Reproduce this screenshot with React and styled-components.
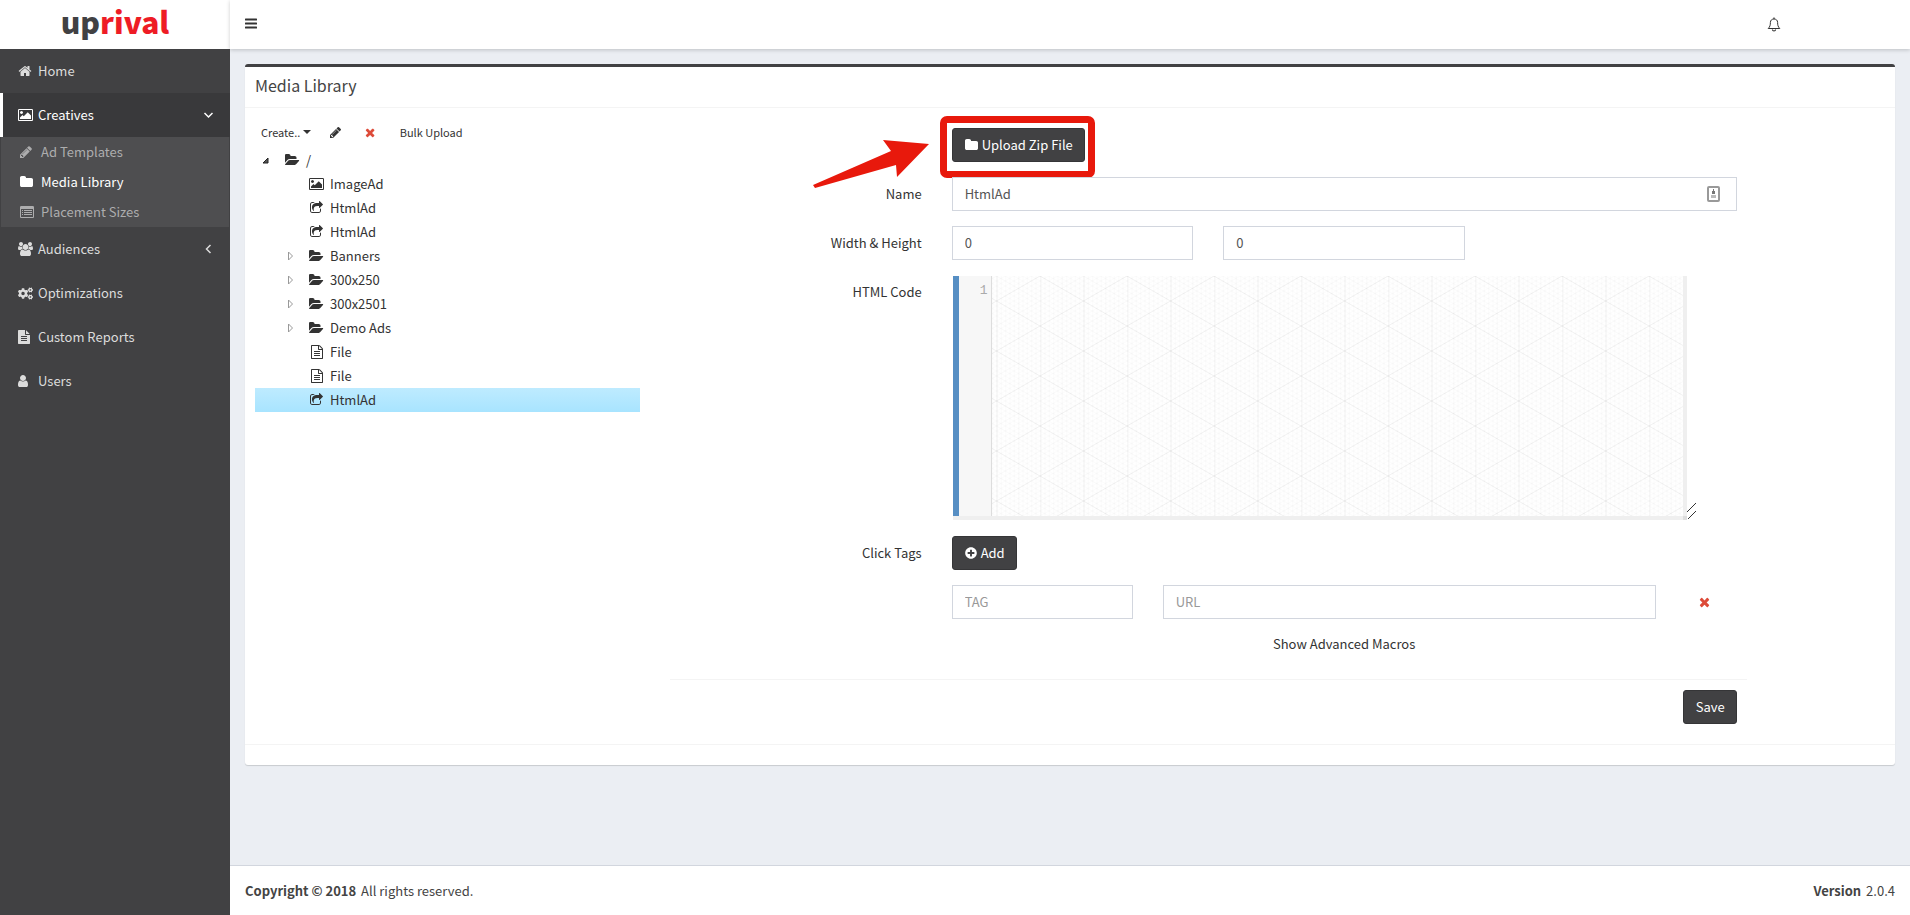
import styled, { createGlobalStyle } from 'styled-components';
import { FaCogs, FaPlusCircle } from 'react-icons/fa';

const GlobalStyle = createGlobalStyle`
  * {
    box-sizing: border-box;
  }

  body {
    margin: 0;
    background: #ebeef3;
    color: #333;
    font-family: "Noto Sans CJK SC", "Noto Sans", sans-serif;
    font-size: 13px;
    line-height: 20px;
  }

  button, input, textarea {
    font: inherit;
    color: inherit;
  }

  ul {
    list-style: none;
    margin: 0;
    padding: 0;
  }

  a {
    color: inherit;
    text-decoration: none;
  }
`;

const Page = styled.div`
  display: grid;
  grid-template-columns: 230px 1fr;
  grid-template-rows: 49px 1fr;
  min-height: 100vh;
`;

const LogoLink = styled.a`
  display: flex;
  justify-content: center;
  background: #fff;
  color: #414143;
  font-size: 30px;
  font-weight: 900;
  line-height: 43px;

  span {
    color: #ee1c25;
  }
`;

const TopBar = styled.header`
  display: flex;
  align-items: center;
  justify-content: space-between;
  padding: 0 122px 1px 8px;
  background: #fff;
  box-shadow: 0 1px 4px rgba(0, 0, 0, 0.2);
`;

const IconButton = styled.button`
  display: flex;
  padding: 7px;
  border: none;
  background: none;
  color: #333;
`;

const Sidebar = styled.nav`
  background: #414143;
  color: #dcdcdc;
`;

const MenuLink = styled.a`
  display: flex;
  align-items: center;
  gap: 5px;
  height: 44px;
  padding: 0 17px 0 15px;
  border-left: 3px solid ${(props) => (props.$active ? '#fff' : 'transparent')};
  background: ${(props) => (props.$active ? '#39393b' : 'none')};
  color: ${(props) => (props.$active ? '#fff' : 'inherit')};
`;

const MenuText = styled.span`
  flex: 1;
`;

const SubMenu = styled.ul`
  margin: 0 1px;
  background: #4e4e50;
`;

const SubLink = styled.a`
  display: flex;
  align-items: center;
  gap: 6px;
  height: 30px;
  padding-left: 19px;
  color: ${(props) => (props.$active ? '#fff' : '#adadae')};
`;

const IconSlot = styled.span`
  display: flex;
  width: 15px;
`;

const Main = styled.div`
  display: flex;
  flex-direction: column;
`;

const Content = styled.main`
  flex: 1;
  padding: 15px;
`;

const Box = styled.section`
  border-top: 3px solid #414143;
  border-radius: 3px;
  background: #fff;
  box-shadow: 0 1px 1px rgba(0, 0, 0, 0.15);
`;

const BoxTitle = styled.h3`
  margin: 0;
  padding: 8px 10px 12px;
  border-bottom: 1px solid #f4f4f4;
  color: #444;
  font-size: 16px;
  font-weight: 400;
  line-height: 20px;
`;

const BoxBody = styled.div`
  display: grid;
  grid-template-columns: repeat(12, 1fr);
  column-gap: 30px;
  padding: 10px 10px 20px;
`;

const BoxFooter = styled.div`
  height: 21px;
  border-top: 1px solid #f4f4f4;
`;

const TreePanel = styled.div`
  grid-column: span 3;
`;

const Toolbar = styled.div`
  display: flex;
  align-items: center;
  gap: 12px;
  height: 30px;
  padding-bottom: 2px;
`;

const ToolButton = styled.button`
  display: flex;
  align-items: center;
  gap: 3px;
  padding: 0 5px;
  border: 1px solid transparent;
  background: none;
  color: ${(props) => props.$color || '#333'};
  font-size: 11px;

  &:first-child {
    padding-right: 0;
  }
`;

const Caret = styled.span`
  border: 4px solid transparent;
  border-top-color: currentColor;
  border-bottom: none;
`;

const TreeRow = styled.li`
  display: flex;
  align-items: center;
  height: 24px;
  padding-left: ${(props) => 6 + props.$level * 24}px;
  background: ${(props) => (props.$selected ? 'linear-gradient(#beebff, #a8e4ff)' : 'none')};
`;

const Toggle = styled.span`
  display: flex;
  width: 24px;
`;

const TreeIcon = styled.span`
  display: flex;
  justify-content: center;
  width: 15px;
  margin-right: 6px;
`;

const Form = styled.form`
  grid-column: span 8;
`;

const Fields = styled.div`
  display: flex;
  flex-direction: column;
  gap: 15px;
  padding: 10px;
`;

const FieldRow = styled.div`
  display: grid;
  grid-template-columns: repeat(12, 1fr);
  column-gap: 30px;
`;

const Label = styled.label`
  grid-column: span 3;
  padding-top: 7px;
  text-align: right;
`;

const Control = styled.div`
  position: relative;
  grid-column: ${(props) => (props.$offset ? '4 / ' : '')} span ${(props) => props.$span || 9};
`;

const Input = styled.input`
  display: block;
  width: 100%;
  height: 34px;
  padding: 5px 12px 7px;
  border: 1px solid #d2d6de;
  background: #fff;
  color: #555;

  &::placeholder {
    color: #999;
  }
`;

const InputBadge = styled.span`
  position: absolute;
  top: 9px;
  right: 17px;
  display: flex;
`;

const Button = styled.button`
  display: inline-flex;
  align-items: center;
  gap: 4px;
  height: 34px;
  padding: 0 11px 0 12px;
  border: 1px solid #353537;
  border-radius: 3px;
  background: #414143;
  color: #fff;
`;

const Highlight = styled.span`
  position: absolute;
  top: -12px;
  left: -12px;
  width: 155px;
  height: 62px;
  border: 7px solid #e8190c;
  border-radius: 7px;
  pointer-events: none;
`;

const Arrow = styled.svg`
  position: absolute;
  top: 12px;
  left: -139px;
  pointer-events: none;
`;

const Editor = styled.div`
  position: relative;
  display: flex;
  width: 95%;
  height: 246px;
  padding: 1px 14px 5px 1px;
`;

const EditorGutter = styled.div`
  width: 39px;
  padding: 5px 3px 0 0;
  border-left: 6px solid #568ec3;
  border-right: 1px solid #ddd;
  background: #f7f7f7;
  box-shadow: 0 4px 0 #efefef;
  color: #aaa;
  font-family: "Liberation Mono", monospace;
  font-size: 13px;
  text-align: right;
`;

const EditorArea = styled.div`
  position: relative;
  flex: 1;
  box-shadow: 4px 0 0 #efefef, 0 4px 0 #efefef, 4px 4px 0 #ddd;

  svg {
    display: block;
  }

  textarea {
    position: absolute;
    inset: 0;
    width: 100%;
    height: 100%;
    padding: 4px;
    border: none;
    background: none;
    resize: none;
    font-family: "Liberation Mono", monospace;
  }
`;

const ResizeGrip = styled.svg`
  position: absolute;
  right: 0;
  bottom: 1px;
`;

const TagRow = styled.div`
  display: grid;
  grid-template-columns: 181fr 493fr 51fr;
  column-gap: 30px;
`;

const RemoveButton = styled.button`
  display: flex;
  align-items: center;
  padding: 0 13px;
  border: none;
  background: none;
  color: #dd4b39;
`;

const MacroLink = styled.a`
  display: block;
  text-align: center;
`;

const FormFooter = styled.div`
  display: flex;
  justify-content: flex-end;
  margin-top: 15px;
  padding: 10px 10px 0;
  border-top: 1px solid #f4f4f4;
`;

const Footer = styled.footer`
  display: flex;
  justify-content: space-between;
  padding: 15px 15px 14px;
  border-top: 1px solid #d2d6de;
  background: #fff;
  color: #444;

  strong {
    margin-right: 2px;
  }
`;

const paths = {
  home: ['0 0 1792 1792', 'M1472 992v480q0 26-19 45t-45 19h-384v-384h-256v384h-384q-26 0-45-19t-19-45v-480q0-1 .5-3t.5-3l575-474 575 474q1 2 1 6zm223-69l-62 74q-8 9-21 11h-3q-13 0-21-7l-692-577-692 577q-12 8-24 7-13-2-21-11l-62-74q-8-10-7-23.5t11-21.5l719-599q32-26 76-26t76 26l244 204v-195q0-14 9-23t23-9h192q14 0 23 9t9 23v408l219 182q10 8 11 21.5t-7 23.5z'],
  image: ['-64 0 1920 1792', 'M576 576q0 80-56 136t-136 56-136-56-56-136 56-136 136-56 136 56 56 136zm1024 384v448h-1408v-192l320-320 160 160 512-512zm96-704h-1600q-13 0-22.5 9.5t-9.5 22.5v1216q0 13 9.5 22.5t22.5 9.5h1600q13 0 22.5-9.5t9.5-22.5v-1216q0-13-9.5-22.5t-22.5-9.5zm160 32v1216q0 66-47 113t-113 47h-1600q-66 0-113-47t-47-113v-1216q0-66 47-113t113-47h1600q66 0 113 47t47 113z'],
  pencil: ['128 0 1536 1792', 'M491 1536l91-91-235-235-91 91v107h128v128h107zm523-928q0-22-22-22-10 0-17 7l-542 542q-7 7-7 17 0 22 22 22 10 0 17-7l542-542q7-7 7-17zm-54-192l416 416-832 832h-416v-416zm683 96q0 53-37 90l-166 166-416-416 166-165q36-38 90-38 53 0 91 38l235 234q37 39 37 91z'],
  folder: ['64 0 1664 1792', 'M1728 608v704q0 92-66 158t-158 66h-1216q-92 0-158-66t-66-158v-960q0-92 66-158t158-66h320q92 0 158 66t66 158v32h672q92 0 158 66t66 158z'],
  folderOpen: ['0 0 1920 1792', 'M1815 952q0 31-31 66l-336 396q-43 51-120.5 86.5t-143.5 35.5h-1088q-34 0-60.5-13t-26.5-43q0-31 31-66l336-396q43-51 120.5-86.5t143.5-35.5h1088q34 0 60.5 13t26.5 43zm-343-344v160h-832q-94 0-197 47.5t-164 119.5l-337 396-5 6q0-4-.5-12.5t-.5-12.5v-960q0-92 66-158t158-66h320q92 0 158 66t66 158v32h544q92 0 158 66t66 158z'],
  list: ['0 0 1792 1792', 'M160 128h1472q66 0 113 47t47 113v1216q0 66-47 113t-113 47h-1472q-66 0-113-47t-47-113v-1216q0-66 47-113t113-47zM128 512v992q0 32 32 32h1472q32 0 32-32v-992zM256 640h128v128h-128zM512 640h1024v128h-1024zM256 896h128v128h-128zM512 896h1024v128h-1024zM256 1152h128v128h-128zM512 1152h1024v128h-1024z'],
  share: ['64 0 1664 1792', 'M1472 989v259q0 119-84.5 203.5t-203.5 84.5h-832q-119 0-203.5-84.5t-84.5-203.5v-832q0-119 84.5-203.5t203.5-84.5h255q13 0 22.5 9.5t9.5 22.5q0 27-26 32-77 26-133 60-10 4-16 4h-112q-66 0-113 47t-47 113v832q0 66 47 113t113 47h832q66 0 113-47t47-113v-214q0-19 18-29 28-13 54-37 16-16 35-8 21 9 21 29zm237-496l-384 384q-18 19-45 19-12 0-25-5-39-17-39-59v-192h-160q-323 0-438 131-119 137-74 473 3 23-20 34-8 2-12 2-16 0-26-13-10-14-21-31t-39.5-68.5-49.5-99.5-38.5-114-17.5-122q0-49 3.5-91t14-90 28-88 47-81.5 68.5-74 94.5-61.5 124.5-48.5 159.5-30.5 196.5-11h160v-192q0-42 39-59 13-5 25-5 26 0 45 19l384 384q19 19 19 45t-19 45z'],
  file: ['128 0 1536 1792', 'M1596 380q28 28 48 76t20 88v1152q0 40-28 68t-68 28h-1344q-40 0-68-28t-28-68v-1600q0-40 28-68t68-28h896q40 0 88 20t76 48zm-444-244v376h376q-10-29-22-41l-313-313q-12-12-41-22zm384 1528v-1024h-416q-40 0-68-28t-28-68v-416h-768v1536h1280zm-1024-864q0-14 9-23t23-9h704q14 0 23 9t9 23v64q0 14-9 23t-23 9h-704q-14 0-23-9t-9-23v-64zm736 224q14 0 23 9t9 23v64q0 14-9 23t-23 9h-704q-14 0-23-9t-9-23v-64q0-14 9-23t23-9h704zm0 256q14 0 23 9t9 23v64q0 14-9 23t-23 9h-704q-14 0-23-9t-9-23v-64q0-14 9-23t23-9h704z'],
  report: ['128 0 1536 1792', 'M1596 476q14 14 28 36h-472v-472q22 14 36 28zm-476 164h544v1056q0 40-28 68t-68 28h-1344q-40 0-68-28t-28-68v-1600q0-40 28-68t68-28h800v544q0 40 28 68t68 28zm160 736v-64q0-14-9-23t-23-9h-704q-14 0-23 9t-9 23v64q0 14 9 23t23 9h704q14 0 23-9t9-23zm0-256v-64q0-14-9-23t-23-9h-704q-14 0-23 9t-9 23v64q0 14 9 23t23 9h704q14 0 23-9t9-23zm0-256v-64q0-14-9-23t-23-9h-704q-14 0-23 9t-9 23v64q0 14 9 23t23 9h704q14 0 23-9t9-23z'],
  user: ['256 0 1280 1792', 'M1536 1399q0 109-62.5 187t-150.5 78h-854q-88 0-150.5-78t-62.5-187q0-85 8.5-160.5t31.5-152 58.5-131 94-89 134.5-34.5q131 128 313 128t313-128q76 0 134.5 34.5t94 89 58.5 131 31.5 152 8.5 160.5zm-256-887q0 159-112.5 271.5t-271.5 112.5-271.5-112.5-112.5-271.5 112.5-271.5 271.5-112.5 271.5 112.5 112.5 271.5z'],
  users: ['64 0 1920 1792', 'M657 896q-162 5-265 128h-134q-82 0-138-40.5t-56-118.5q0-353 124-353 6 0 43.5 21t97.5 42.5 119 21.5q67 0 133-23-5 37-5 66 0 143 81 256zm1071 637q0 120-73 189.5t-194 69.5h-874q-121 0-194-69.5t-73-189.5q0-53 3.5-103.5t14-109 26.5-108.5 43-97.5 62-81 85.5-53.5 111.5-20q10 0 43 21.5t73 48 107 48 135 21.5 135-21.5 107-48 73-48 43-21.5q61 0 111.5 20t85.5 53.5 62 81 43 97.5 26.5 108.5 14 109 3.5 103.5zm-1024-1277q0 106-75 181t-181 75-181-75-75-181 75-181 181-75 181 75 75 181zm704 384q0 159-112.5 271.5t-271.5 112.5-271.5-112.5-112.5-271.5 112.5-271.5 271.5-112.5 271.5 112.5 112.5 271.5zm576 225q0 78-56 118.5t-138 40.5h-134q-103-123-265-128 81-117 81-256 0-29-5-66 66 23 133 23 59 0 119-21.5t97.5-42.5 43.5-21q124 0 124 353zm-128-609q0 106-75 181t-181 75-181-75-75-181 75-181 181-75 181 75 75 181z'],
  times: ['192 0 1408 1792', 'M1490 1322q0 40-28 68l-136 136q-28 28-68 28t-68-28l-294-294-294 294q-28 28-68 28t-68-28l-136-136q-28-28-28-68t28-68l294-294-294-294q-28-28-28-68t28-68l136-136q28-28 68-28t68 28l294 294 294-294q28-28 68-28t68 28l136 136q28 28 28 68t-28 68l-294 294 294 294q28 28 28 68z'],
  bars: ['128 0 1536 1792', 'M192 1216h1408q64 0 64 64v128q0 64-64 64h-1408q-64 0-64-64v-128q0-64 64-64zM192 704h1408q64 0 64 64v128q0 64-64 64h-1408q-64 0-64-64v-128q0-64 64-64zM192 192h1408q64 0 64 64v128q0 64-64 64h-1408q-64 0-64-64v-128q0-64 64-64z'],
};

function Icon({ name, size = 14 }) {
  const [viewBox, d] = paths[name];
  const width = (size * Number(viewBox.split(' ')[2])) / 1792;
  return (
    <svg width={width} height={size} viewBox={viewBox} fill="currentColor" fillRule={name === 'list' ? 'evenodd' : 'nonzero'} aria-hidden="true">
      <path d={d} />
    </svg>
  );
}

function BellIcon() {
  return (
    <svg width="14" height="15" viewBox="0 0 14 15" fill="none" stroke="#333" aria-hidden="true">
      <path d="M1.2 11.5C3 9.8 3.4 8 3.4 5.4C3.4 3.2 5 2 7 2S10.6 3.2 10.6 5.4C10.6 8 11 9.8 12.8 11.5Z" strokeLinejoin="round" />
      <path d="M7 .5V2M5.4 12.5Q5.6 14 7 14T8.6 12.5" strokeWidth="1.2" />
    </svg>
  );
}

function Chevron({ down }) {
  return (
    <svg width="10" height="10" viewBox="0 0 10 10" fill="none" stroke="currentColor" strokeWidth="1.5" aria-hidden="true">
      <path d={down ? 'M1.5 3L5.5 7L9.5 3' : 'M7.5 1L3.5 5L7.5 9'} />
    </svg>
  );
}

const subItems = [
  { icon: 'pencil', text: 'Ad Templates' },
  { icon: 'folder', text: 'Media Library', active: true },
  { icon: 'list', text: 'Placement Sizes' },
];

const treeItems = [
  { icon: 'folderOpen', text: '/', level: 0, open: true },
  { icon: 'image', text: 'ImageAd' },
  { icon: 'share', text: 'HtmlAd' },
  { icon: 'share', text: 'HtmlAd' },
  { icon: 'folderOpen', text: 'Banners', closed: true },
  { icon: 'folderOpen', text: '300x250', closed: true },
  { icon: 'folderOpen', text: '300x2501', closed: true },
  { icon: 'folderOpen', text: 'Demo Ads', closed: true },
  { icon: 'file', text: 'File' },
  { icon: 'file', text: 'File' },
  { icon: 'share', text: 'HtmlAd', selected: true },
];

// isometric paper: ten fine lines for each strong one
function IsoGrid() {
  const steps = Array.from({ length: 21 }, (_, i) => (i - 10) * 5);
  const columns = Array.from({ length: 20 }, (_, i) => i * 4.35);
  const shade = (i) => (i % 10 === 0 ? 0.05 : i % 5 === 0 ? 0.02 : 0.01);
  return (
    <svg width="100%" height="100%" aria-hidden="true">
      <defs>
        <pattern id="iso" x="48" y="0" width="87" height="50" patternUnits="userSpaceOnUse">
          {columns.map((x, i) => (
            <path key={x} d={`M${x + 0.5} 0V50`} stroke="#000" strokeWidth={i === 0 ? 2 : 1} strokeOpacity={i === 0 ? 0.03 : shade(i)} />
          ))}
          {steps.map((y, i) => (
            <path key={y} d={`M0 ${y}L87 ${y + 50}M87 ${y}L0 ${y + 50}`} stroke="#000" strokeOpacity={shade(i)} />
          ))}
        </pattern>
      </defs>
      <rect width="100%" height="100%" fill="#fff" />
      <rect width="100%" height="100%" fill="url(#iso)" />
    </svg>
  );
}

function SideMenu() {
  return (
    <Sidebar>
      <ul>
        <li>
          <MenuLink href="#home"><IconSlot><Icon name="home" /></IconSlot><MenuText>Home</MenuText></MenuLink>
        </li>
        <li>
          <MenuLink href="#creatives" $active>
            <IconSlot><Icon name="image" /></IconSlot>
            <MenuText>Creatives</MenuText>
            <Chevron down />
          </MenuLink>
          <SubMenu>
            {subItems.map((item) => (
              <li key={item.text}>
                <SubLink href="#sub" $active={item.active}>
                  <IconSlot><Icon name={item.icon} /></IconSlot>
                  {item.text}
                </SubLink>
              </li>
            ))}
          </SubMenu>
        </li>
        <li>
          <MenuLink href="#audiences">
            <IconSlot><Icon name="users" /></IconSlot>
            <MenuText>Audiences</MenuText>
            <Chevron />
          </MenuLink>
        </li>
        <li>
          <MenuLink href="#optimizations"><IconSlot><FaCogs size={15} /></IconSlot><MenuText>Optimizations</MenuText></MenuLink>
        </li>
        <li>
          <MenuLink href="#reports"><IconSlot><Icon name="report" /></IconSlot><MenuText>Custom Reports</MenuText></MenuLink>
        </li>
        <li>
          <MenuLink href="#users"><IconSlot><Icon name="user" /></IconSlot><MenuText>Users</MenuText></MenuLink>
        </li>
      </ul>
    </Sidebar>
  );
}

function MediaTree() {
  return (
    <TreePanel>
      <Toolbar>
        <ToolButton type="button">Create..<Caret /></ToolButton>
        <ToolButton type="button" aria-label="Rename"><Icon name="pencil" size={13} /></ToolButton>
        <ToolButton type="button" aria-label="Delete" $color="#dd4b39"><Icon name="times" size={13} /></ToolButton>
        <ToolButton type="button">Bulk Upload</ToolButton>
      </Toolbar>
      <ul>
        {treeItems.map((item, i) => (
          <TreeRow key={i} $level={item.level ?? 1} $selected={item.selected}>
            <Toggle>
              {item.open && <svg width="9" height="9"><path d="M7 2V7H2Z" fill="#555" stroke="#222" /></svg>}
              {item.closed && <svg width="10" height="10"><path d="M3.5 1L7.5 5L3.5 9Z" fill="none" stroke="#999" /></svg>}
            </Toggle>
            <TreeIcon><Icon name={item.icon} /></TreeIcon>
            {item.text}
          </TreeRow>
        ))}
      </ul>
    </TreePanel>
  );
}

function AdForm() {
  return (
    <Form>
      <Fields>
        <FieldRow>
          <Control $offset>
            <Button type="button"><Icon name="folder" />Upload Zip File</Button>
            <Highlight />
            <Arrow width="116" height="50" viewBox="813 140 116 50">
              <path d="M883 140L929 144L897 177L896 165L815 188L813 185L891 151Z" fill="#e8190c" />
            </Arrow>
          </Control>
        </FieldRow>
        <FieldRow>
          <Label htmlFor="name">Name</Label>
          <Control>
            <Input id="name" defaultValue="HtmlAd" />
            <InputBadge>
              <svg width="13" height="16" aria-hidden="true">
                <rect x="1" y="1" width="11" height="14" rx="1" fill="#fff" stroke="#999" strokeWidth="2" />
                <path d="M6 3h1v2h1v3h-3v-3h1z" fill="#777" />
                <path d="M4 9h5v3h-5z" fill="#bbb" />
              </svg>
            </InputBadge>
          </Control>
        </FieldRow>
        <FieldRow>
          <Label htmlFor="width">Width &amp; Height</Label>
          <Control $span={3}><Input id="width" defaultValue="0" /></Control>
          <Control $span={3}><Input aria-label="Height" defaultValue="0" /></Control>
        </FieldRow>
        <FieldRow>
          <Label htmlFor="code">HTML Code</Label>
          <Control>
            <Editor>
              <EditorGutter>1</EditorGutter>
              <EditorArea>
                <IsoGrid />
                <textarea id="code" />
              </EditorArea>
              <ResizeGrip width="10" height="18" aria-hidden="true">
                <path d="M0 10L9 1M1 17L9 9" stroke="#333" />
              </ResizeGrip>
            </Editor>
          </Control>
        </FieldRow>
        <FieldRow>
          <Label as="span">Click Tags</Label>
          <Control><Button type="button"><FaPlusCircle size={12} />Add</Button></Control>
        </FieldRow>
        <FieldRow>
          <Control $offset>
            <TagRow>
              <Input aria-label="Tag" placeholder="TAG" />
              <Input aria-label="URL" placeholder="URL" />
              <RemoveButton type="button" aria-label="Remove"><Icon name="times" /></RemoveButton>
            </TagRow>
          </Control>
        </FieldRow>
        <FieldRow>
          <Control $offset><MacroLink href="#macros">Show Advanced Macros</MacroLink></Control>
        </FieldRow>
      </Fields>
      <FormFooter><Button type="submit">Save</Button></FormFooter>
    </Form>
  );
}

function App() {
  return (
    <>
      <GlobalStyle />
      <Page>
        <LogoLink href="#home">up<span>rival</span></LogoLink>
        <TopBar>
          <IconButton type="button" aria-label="Toggle menu"><Icon name="bars" /></IconButton>
          <IconButton type="button" aria-label="Notifications"><BellIcon /></IconButton>
        </TopBar>
        <SideMenu />
        <Main>
          <Content>
            <Box>
              <BoxTitle>Media Library</BoxTitle>
              <BoxBody>
                <MediaTree />
                <AdForm />
              </BoxBody>
              <BoxFooter />
            </Box>
          </Content>
          <Footer>
            <div><strong>Copyright © 2018</strong> All rights reserved.</div>
            <div><strong>Version</strong> 2.0.4</div>
          </Footer>
        </Main>
      </Page>
    </>
  );
}

export default App;
